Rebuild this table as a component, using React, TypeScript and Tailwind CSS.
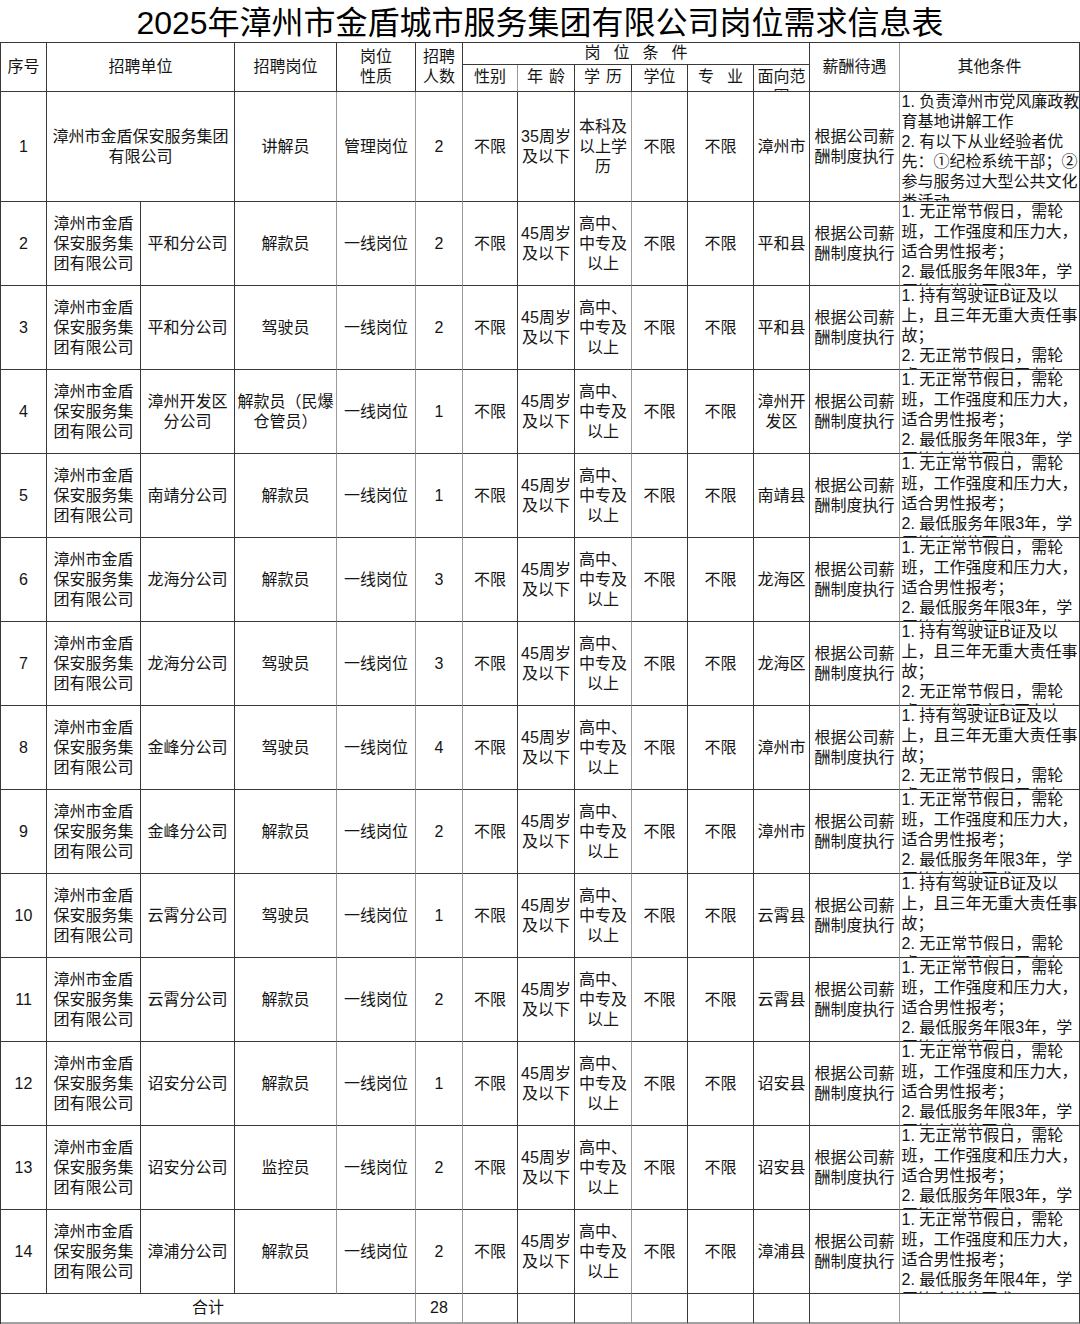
import React from 'react';

type Row = {
  no: number;
  unit?: string;
  branch?: string;
  post: string;
  kind: string;
  count: number;
  age: string;
  edu: string;
  area: string;
  other: string;
};

const otherA = (years: number) =>
  `1. 无正常节假日，需轮班，工作强度和压力大，适合男性报考；\n2. 最低服务年限${years}年，学历符合岗位要求。`;
const otherB =
  '1. 持有驾驶证B证及以上，且三年无重大责任事故；\n2. 无正常节假日，需轮班，工作强度和压力大，适合男性报考；';

const rows: Row[] = [
  {
    no: 1,
    unit: '漳州市金盾保安服务集团有限公司',
    post: '讲解员',
    kind: '管理岗位',
    count: 2,
    age: '35周岁及以下',
    edu: '本科及以上学历',
    area: '漳州市',
    other:
      '1. 负责漳州市党风廉政教育基地讲解工作\n2. 有以下从业经验者优先：①纪检系统干部；②参与服务过大型公共文化类活动。',
  },
  { no: 2, branch: '平和分公司', post: '解款员', kind: '一线岗位', count: 2, age: '45周岁及以下', edu: '高中、中专及以上', area: '平和县', other: otherA(3) },
  { no: 3, branch: '平和分公司', post: '驾驶员', kind: '一线岗位', count: 2, age: '45周岁及以下', edu: '高中、中专及以上', area: '平和县', other: otherB },
  { no: 4, branch: '漳州开发区分公司', post: '解款员（民爆仓管员）', kind: '一线岗位', count: 1, age: '45周岁及以下', edu: '高中、中专及以上', area: '漳州开发区', other: otherA(3) },
  { no: 5, branch: '南靖分公司', post: '解款员', kind: '一线岗位', count: 1, age: '45周岁及以下', edu: '高中、中专及以上', area: '南靖县', other: otherA(3) },
  { no: 6, branch: '龙海分公司', post: '解款员', kind: '一线岗位', count: 3, age: '45周岁及以下', edu: '高中、中专及以上', area: '龙海区', other: otherA(3) },
  { no: 7, branch: '龙海分公司', post: '驾驶员', kind: '一线岗位', count: 3, age: '45周岁及以下', edu: '高中、中专及以上', area: '龙海区', other: otherB },
  { no: 8, branch: '金峰分公司', post: '驾驶员', kind: '一线岗位', count: 4, age: '45周岁及以下', edu: '高中、中专及以上', area: '漳州市', other: otherB },
  { no: 9, branch: '金峰分公司', post: '解款员', kind: '一线岗位', count: 2, age: '45周岁及以下', edu: '高中、中专及以上', area: '漳州市', other: otherA(3) },
  { no: 10, branch: '云霄分公司', post: '驾驶员', kind: '一线岗位', count: 1, age: '45周岁及以下', edu: '高中、中专及以上', area: '云霄县', other: otherB },
  { no: 11, branch: '云霄分公司', post: '解款员', kind: '一线岗位', count: 2, age: '45周岁及以下', edu: '高中、中专及以上', area: '云霄县', other: otherA(3) },
  { no: 12, branch: '诏安分公司', post: '解款员', kind: '一线岗位', count: 1, age: '45周岁及以下', edu: '高中、中专及以上', area: '诏安县', other: otherA(3) },
  { no: 13, branch: '诏安分公司', post: '监控员', kind: '一线岗位', count: 2, age: '45周岁及以下', edu: '高中、中专及以上', area: '诏安县', other: otherA(3) },
  { no: 14, branch: '漳浦分公司', post: '解款员', kind: '一线岗位', count: 2, age: '45周岁及以下', edu: '高中、中专及以上', area: '漳浦县', other: otherA(4) },
];

const widths = [46, 94, 94, 102, 79, 47, 55, 57, 57, 56, 66, 56, 90, 180];

// dark grid line, some columns print lighter grey in the scan
const td = 'p-0 border-r border-b border-[#3a3a3a] align-middle';
const grey = 'border-r-[#9a9a9a]';

const Box = ({ h, children }: { h: number; children?: React.ReactNode }) => (
  <div
    className="flex items-center justify-center overflow-hidden px-[3px] text-center"
    style={{ height: h }}
  >
    <div className="w-full">{children}</div>
  </div>
);

const App = () => {
  return (
    <div className="w-[1080px] h-[1324px] bg-white text-[#151515] font-['Liberation_Sans','Noto_Sans_CJK_SC',sans-serif] text-[16px] leading-[20px] overflow-hidden">
      <div className="h-[42px] flex items-center justify-center text-[32px] leading-[42px] text-black pt-[3px]">
        2025年漳州市金盾城市服务集团有限公司岗位需求信息表
      </div>

      <table className="table-fixed border-separate border-spacing-0 border-l border-t border-[#3a3a3a] w-[1080px]">
        <colgroup>
          {widths.map((w, i) => (
            <col key={i} style={{ width: w }} />
          ))}
        </colgroup>
        <thead>
          <tr>
            <th rowSpan={2} className={`${td} font-normal`}>序号</th>
            <th rowSpan={2} colSpan={2} className={`${td} font-normal`}>招聘单位</th>
            <th rowSpan={2} className={`${td} font-normal`}>招聘岗位</th>
            <th rowSpan={2} className={`${td} font-normal`}>
              岗位
              <br />
              性质
            </th>
            <th rowSpan={2} className={`${td} font-normal`}>
              招聘
              <br />
              人数
            </th>
            <th colSpan={6} className={`${td} font-normal`}>
              <div className="h-[21px] flex justify-center gap-[13px] leading-[20px]">
                <span>岗</span>
                <span>位</span>
                <span>条</span>
                <span>件</span>
              </div>
            </th>
            <th rowSpan={2} className={`${td} ${grey} font-normal`}>薪酬待遇</th>
            <th rowSpan={2} className={`${td} font-normal`}>其他条件</th>
          </tr>
          <tr>
            {[
              ['性别'],
              ['年', '龄'],
              ['学', '历'],
              ['学位'],
              ['专', '业'],
              ['面向范围'],
            ].map((parts, i) => (
              <th key={i} className={`${td} ${i === 0 ? grey : ''} font-normal align-top`}>
                <div
                  className={`h-[26px] overflow-hidden pt-[2px] flex justify-center px-[2px] ${
                    i === 4 ? 'gap-[13px]' : 'gap-[6px]'
                  }`}
                >
                  {parts.map((p) => (
                    <span key={p}>{p}</span>
                  ))}
                </div>
              </th>
            ))}
          </tr>
        </thead>
        <tbody>
          {rows.map((r) => {
            const h = r.no === 1 ? 109 : 83;
            return (
              <tr key={r.no}>
                <td className={td}>
                  <Box h={h}>{r.no}</Box>
                </td>
                {r.unit ? (
                  <td colSpan={2} className={td}>
                    <Box h={h}>{r.unit}</Box>
                  </td>
                ) : (
                  <>
                    <td className={td}>
                      <Box h={h}>漳州市金盾保安服务集团有限公司</Box>
                    </td>
                    <td className={td}>
                      <Box h={h}>{r.branch}</Box>
                    </td>
                  </>
                )}
                <td className={`${td} ${grey}`}>
                  <div className="flex items-center justify-center overflow-hidden px-[2px] text-center" style={{ height: h }}>
                    <div className="w-full">{r.post}</div>
                  </div>
                </td>
                <td className={`${td} ${grey}`}>
                  <Box h={h}>{r.kind}</Box>
                </td>
                <td className={`${td} ${grey}`}>
                  <Box h={h}>{r.count}</Box>
                </td>
                <td className={td}>
                  <Box h={h}>不限</Box>
                </td>
                <td className={td}>
                  <Box h={h}>{r.age}</Box>
                </td>
                <td className={`${td} ${grey}`}>
                  <Box h={h}>{r.edu}</Box>
                </td>
                <td className={td}>
                  <Box h={h}>不限</Box>
                </td>
                <td className={td}>
                  <Box h={h}>不限</Box>
                </td>
                <td className={td}>
                  <Box h={h}>{r.area}</Box>
                </td>
                <td className={`${td} ${grey}`}>
                  <Box h={h}>根据公司薪酬制度执行</Box>
                </td>
                <td className={`${td} align-top`}>
                  <div
                    className="overflow-hidden pl-[1.5px] pr-0 mr-[-1px] text-left whitespace-pre-line"
                    style={{ height: h }}
                  >
                    {r.other}
                  </div>
                </td>
              </tr>
            );
          })}
          <tr>
            <td colSpan={5} className={`${td} ${grey} border-b-2 border-b-[#a0a0a0]`}>
              <Box h={28}>合计</Box>
            </td>
            <td className={`${td} ${grey} border-b-2 border-b-[#a0a0a0]`}>
              <Box h={28}>28</Box>
            </td>
            {Array.from({ length: 8 }).map((_, i) => (
              <td
                key={i}
                className={`${td} ${i === 2 || i === 6 ? grey : ''} border-b-2 border-b-[#a0a0a0]`}
              >
                <Box h={28} />
              </td>
            ))}
          </tr>
        </tbody>
      </table>
    </div>
  );
};

export default App;
